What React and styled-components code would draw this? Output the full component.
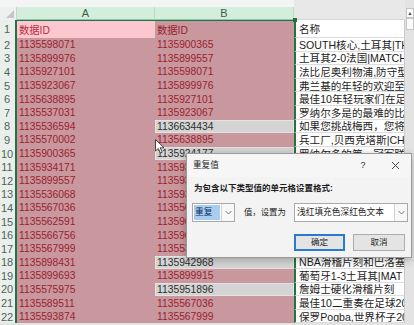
import React from 'react'
import styled, { createGlobalStyle } from 'styled-components'

const GlobalStyle = createGlobalStyle`
  html, body { margin: 0; padding: 0; }
  body {
    background: #e4e4e4;
    font-family: "Liberation Sans", "Noto Sans CJK SC", sans-serif;
  }
`

const colA = [
  '1135598071', '1135899976', '1135927101', '1135923067', '1135638895',
  '1135537031', '1135536594', '1135570002', '1135900365', '1135934171',
  '1135899557', '1135536068', '1135567036', '1135562591', '1135566756',
  '1135567999', '1135898431', '1135899693', '1135575975', '1135589511',
  '1135593874',
]

const colB = [
  '1135900365', '1135899557', '1135598071', '1135899976', '1135927101',
  '1135923067', '1136634434', '1135638895', '1135924177', '1135934171',
  '1135936068', '1135936594', '1135567036', '1135962591', '1135966756',
  '1135537031', '1135942968', '1135899915', '1135951896', '1135567036',
  '1135567999',
]

const colC = [
  'SOUTH核心,土耳其|THE', '土耳其2-0法国|MATCH', '法比尼奥利物浦,防守型', '弗兰基的年轻的欢迎至',
  '最佳10年轻玩家们在足', '罗纳尔多是的最难的比', '如果您挑战梅西，您将', '兵工厂,贝西克塔斯|CHA',
  '罗纳尔多的第一冠军联', '梅西的最佳进球集锦', '巴西2-1比利时|MATCH', '最佳10扑救在足球20',
  '内马尔的滑稽片刻', '阿扎尔的最佳技巧', '萨拉赫利物浦,前锋', '曼城3-0切尔西|MATCH',
  'NBA滑稽片刻和巴洛塞', '葡萄牙1-3土耳其|MAT', '詹姆士硬化滑稽片刻', '最佳10二重奏在足球20',
  '保罗Pogba,世界杯子20',
]

const plainRows = [8, 10, 18, 20]

const Page = styled.div`
  position: relative;
  width: 414px;
  height: 325px;
  overflow: hidden;
  display: flex;
  background: #e3e3e3;
`

const SheetArea = styled.div`
  display: flex;
  flex-direction: column;
  width: 405px;
`

const TopStrip = styled.div`
  height: 7px;
  background: linear-gradient(to right, #f3f4f3 294px, #e8e8e8 294px);
`

const Grid = styled.div`
  display: grid;
  grid-template-columns: 17px 138px 139px 111px;
  grid-template-rows: 13px 18px repeat(21, 13.6px);
`

const Corner = styled.div`
  background: #eef0ef;
  border-right: 1px solid #d0d0d0;
  position: relative;
  &::after {
    content: '';
    position: absolute;
    right: 2px;
    bottom: 2px;
    border-left: 8px solid transparent;
    border-bottom: 8px solid #c6c6c6;
  }
`

const ColHead = styled.div`
  display: flex;
  align-items: center;
  justify-content: center;
  font-size: 11px;
  color: #3f5b49;
  background: ${p => (p.$active ? '#d3eedd' : '#e8e8e8')};
  border-right: 1px solid ${p => (p.$active ? '#b9dcc6' : '#e8e8e8')};
  border-bottom: 1px solid ${p => (p.$active ? '#8fc9a5' : '#d6d6d6')};
  box-sizing: border-box;
`

const RowHead = styled.div`
  display: flex;
  align-items: center;
  justify-content: center;
  font-size: 11px;
  color: #4c6655;
  background: #eaefec;
  border-right: 2px solid #217346;
  box-sizing: border-box;
  padding-right: 1px;
`

const tones = {
  head: { bg: '#fdc7cf', fg: '#b8303f' },
  dup: { bg: '#c9979e', fg: '#9a1f2e' },
  plain: { bg: '#d4d4d4', fg: '#2e2e2e' },
  name: { bg: '#ffffff', fg: '#1c1c1c' },
}

const Cell = styled.div`
  display: flex;
  align-items: center;
  padding-left: ${p => (p.$tone === 'name' ? '3px' : '2px')};
  font-size: ${p => (p.$tone === 'name' ? '10.6px' : '10.3px')};
  white-space: nowrap;
  overflow: hidden;
  background: ${p => tones[p.$tone].bg};
  color: ${p => tones[p.$tone].fg};
  box-sizing: border-box;
  ${p => p.$tone === 'name' && `
    border-bottom: 1px solid #dcdcdc;
    border-right: 1px solid #c8c8c8;
    border-left: 2px solid #217346;
  `}
  ${p => p.$tone === 'plain' && `
    box-shadow: inset 0 0 0 1px #e2e2e2;
  `}
`

const Selection = styled.div`
  position: absolute;
  left: 17px;
  top: 20px;
  width: 277px;
  height: 320px;
  border-top: 1px solid #217346;
  box-sizing: border-box;
  pointer-events: none;
  &::after {
    content: '';
    position: absolute;
    right: -3px;
    top: -3px;
    width: 4px;
    height: 4px;
    background: #217346;
  }
`

const Gutter = styled.div`
  flex: 1;
  display: flex;
  flex-direction: column;
  padding: 8px 0 0 1px;
`

const ScrollBtn = styled.div`
  height: ${p => p.$h}px;
  background: #fafafa;
  border: 1px solid #c4c4c4;
  box-sizing: border-box;
  display: flex;
  align-items: center;
  justify-content: center;
  font-size: 5px;
  line-height: 1;
  color: #444;
`

const Dialog = styled.div`
  position: absolute;
  left: 186px;
  top: 153px;
  width: 226px;
  height: 105px;
  box-sizing: border-box;
  background: #f3f3f3;
  border: 1px solid #9a9a9a;
  box-shadow: 0 2px 8px rgba(0, 0, 0, 0.25);
  font-size: 8.7px;
  line-height: 1.1;
  color: #1e1e1e;
  display: flex;
  flex-direction: column;
  white-space: nowrap;
`

const TitleBar = styled.div`
  height: 23px;
  display: flex;
  align-items: center;
  padding: 0 0 0 6px;
  background: #f6f6f6;
`

const Title = styled.div`
  flex: 1;
  font-size: 8.6px;
`

const TitleBtn = styled.div`
  width: 32px;
  display: flex;
  justify-content: center;
  align-items: center;
  font-size: 9px;
  color: #333;
`

const Body = styled.div`
  padding: 5px 5px 0 5px;
  display: flex;
  flex-direction: column;
`

const Prompt = styled.div`
  height: 12px;
  line-height: 12px;
  padding-left: 2px;
  font-weight: bold;
  font-size: 8.5px;
`

const Controls = styled.div`
  margin-top: 9px;
  height: 19px;
  display: flex;
  align-items: center;
`

const Select = styled.div`
  width: ${p => p.$w}px;
  flex: none;
  height: 19px;
  box-sizing: border-box;
  border: 1px solid #a9a9a9;
  background: #fff;
  display: flex;
`

const SelectValue = styled.div`
  flex: 1;
  display: flex;
  align-items: center;
  padding-left: 2px;
  ${p => p.$hl && `
    margin: 1px;
    padding-left: 1px;
    background: #a9cdf1;
    color: #10305a;
  `}
`

const SelectArrow = styled.div`
  width: 12px;
  border-left: 1px solid #d2d2d2;
  background: #f7f7f7;
  display: flex;
  align-items: center;
  justify-content: center;
`

const Between = styled.div`
  width: 42px;
  flex: none;
  margin: 0 8px 0 9px;
  font-size: 8.4px;
`

const Buttons = styled.div`
  margin-top: 12px;
  display: flex;
  justify-content: flex-end;
  gap: 8px;
  padding-right: 1px;
`

const Button = styled.div`
  width: ${p => p.$w}px;
  height: 17px;
  box-sizing: border-box;
  display: flex;
  align-items: center;
  justify-content: center;
  background: #e4e4e4;
  border: ${p => (p.$primary ? '2px solid #2b7ad1' : '1px solid #adadad')};
  font-size: 8.5px;
`

const Cursor = styled.svg`
  position: absolute;
  left: 155px;
  top: 139px;
`

const Chevron = () => (
  <svg width="7" height="5" viewBox="0 0 7 5">
    <polyline points="0.5,1 3.5,4 6.5,1" fill="none" stroke="#6a6a6a" strokeWidth="0.9" />
  </svg>
)

const App = () => {
  return (
    <Page>
      <GlobalStyle />
      <SheetArea>
        <TopStrip />
        <Grid>
          <Corner />
          <ColHead $active>A</ColHead>
          <ColHead $active>B</ColHead>
          <ColHead />

          <RowHead>1</RowHead>
          <Cell $tone="head">数据ID</Cell>
          <Cell $tone="dup">数据ID</Cell>
          <Cell $tone="name">名称</Cell>

          {colA.map((a, i) => {
            const n = i + 2
            return (
              <React.Fragment key={n}>
                <RowHead>{n}</RowHead>
                <Cell $tone="dup">{a}</Cell>
                <Cell $tone={plainRows.includes(n) ? 'plain' : 'dup'}>{colB[i]}</Cell>
                <Cell $tone="name">{colC[i]}</Cell>
              </React.Fragment>
            )
          })}
        </Grid>
      </SheetArea>
      <Gutter>
        <ScrollBtn $h={10}>▲</ScrollBtn>
        <ScrollBtn $h={12} />
      </Gutter>

      <Selection />

      <Cursor width="10" height="15" viewBox="0 0 10 15">
        <path d="M0.5 0.5 L0.5 12 L3.3 9.4 L5.4 14 L7.2 13.2 L5.2 8.8 L9 8.8 Z" fill="#fff" stroke="#222" strokeWidth="0.8" />
      </Cursor>

      <Dialog>
        <TitleBar>
          <Title>重复值</Title>
          <TitleBtn>?</TitleBtn>
          <TitleBtn>
            <svg width="9" height="9" viewBox="0 0 9 9">
              <path d="M1 1 L8 8 M8 1 L1 8" stroke="#333" strokeWidth="0.9" />
            </svg>
          </TitleBtn>
        </TitleBar>
        <Body>
          <Prompt>为包含以下类型值的单元格设置格式:</Prompt>
          <Controls>
            <Select $w={43}>
              <SelectValue $hl>重复</SelectValue>
              <SelectArrow><Chevron /></SelectArrow>
            </Select>
            <Between>值，设置为</Between>
            <Select $w={114}>
              <SelectValue>浅红填充色深红色文本</SelectValue>
              <SelectArrow><Chevron /></SelectArrow>
            </Select>
          </Controls>
          <Buttons>
            <Button $primary $w={51}>确定</Button>
            <Button $w={52}>取消</Button>
          </Buttons>
        </Body>
      </Dialog>
    </Page>
  )
}

export default App
